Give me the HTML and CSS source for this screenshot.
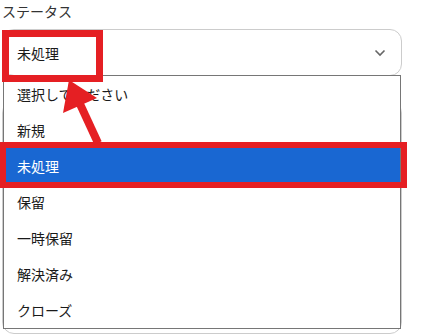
FILE: index.html
```html
<!DOCTYPE html>
<html lang="ja">
<head>
    <meta charset="UTF-8">
    <meta name="viewport" content="width=device-width, initial-scale=1.0">
    <title>ステータス</title>
    <link rel="stylesheet" href="styles.css">
</head>
<body>
    <div class="form">
        <div class="label">ステータス</div>
        <div class="select-wrap">
            <div class="select">
                <span class="value">未処理</span>
                <svg class="chevron" width="12" height="8" viewBox="0 0 12 8">
                    <path d="M1.5 1.5 L6 6 L10.5 1.5" fill="none" stroke="#666" stroke-width="1.6"/>
                </svg>
            </div>
            <ul class="dropdown">
                <li class="option">選択してください</li>
                <li class="option">新規</li>
                <li class="option selected">未処理</li>
                <li class="option">保留</li>
                <li class="option">一時保留</li>
                <li class="option">解決済み</li>
                <li class="option">クローズ</li>
            </ul>
        </div>
        <div class="next-field"></div>
    </div>

    <!-- annotations -->
    <div class="mark mark-value"></div>
    <div class="mark mark-option"></div>
    <svg class="arrow" width="430" height="336" viewBox="0 0 430 336">
        <line x1="98" y1="143" x2="80" y2="104" stroke="#e51f23" stroke-width="8"/>
        <polygon points="69,80 63,113 97,98" fill="#e51f23"/>
    </svg>
</body>
</html>
```

FILE: styles.css
```css
* {
    margin: 0;
    padding: 0;
    box-sizing: border-box;
}

body {
    width: 430px;
    height: 336px;
    overflow: hidden;
    background: #fff;
    font-family: 'Noto Sans CJK JP', 'Noto Sans', sans-serif;
    font-size: 14px;
    color: #1a1a1a;
    position: relative;
}

.form {
    padding: 2px 28px 0 2px;
}

.label {
    height: 20px;
    line-height: 18px;
    font-size: 14px;
    color: #333;
    margin-bottom: 7px;
}

.select-wrap {
    position: relative;
}

.select {
    height: 47px;
    border: 1px solid #ccc;
    border-radius: 12px;
    display: flex;
    align-items: center;
    justify-content: space-between;
    padding: 0 15px 0 14px;
    background: #fff;
}

.value {
    font-size: 14px;
}

.chevron {
    display: block;
}

.dropdown {
    list-style: none;
    position: absolute;
    top: 46px;
    left: 1px;
    right: 1px;
    border: 1px solid #767676;
    background: #fff;
    z-index: 2;
}

.option {
    height: 36px;
    line-height: 36px;
    padding-left: 13px;
    font-size: 14px;
}

.option.selected {
    background: #1967d2;
    color: #fff;
}

.next-field {
    margin-top: 25px;
    height: 233px;
    border: 1px solid #ccc;
    border-radius: 12px;
}

.mark {
    position: absolute;
    border: 7px solid #e51f23;
    z-index: 3;
}

.mark-value {
    left: 2px;
    top: 30px;
    width: 101px;
    height: 52px;
}

.mark-option {
    left: 0;
    top: 142px;
    width: 407px;
    height: 46px;
    border-width: 6px;
}

.arrow {
    position: absolute;
    left: 0;
    top: 0;
    z-index: 4;
}
```
